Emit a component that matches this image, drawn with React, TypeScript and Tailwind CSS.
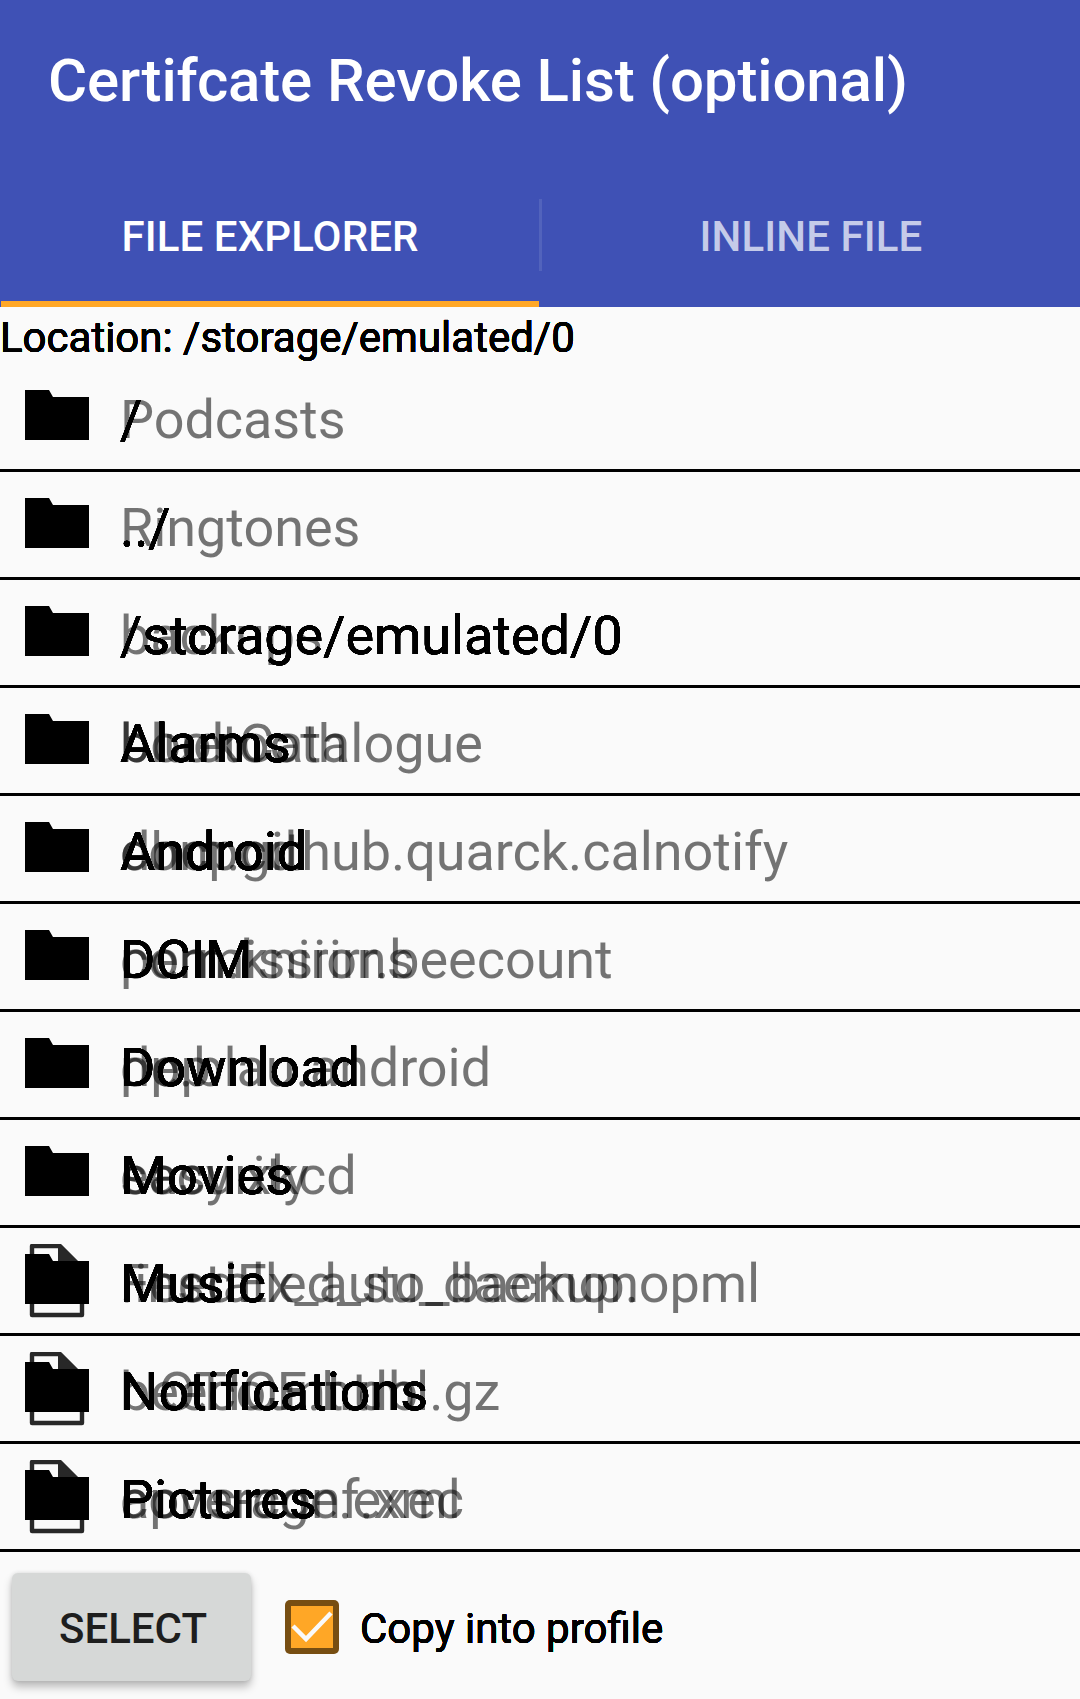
import React from "react";

type Row = { name: string; ghosts: string[]; file?: boolean };

const rows: Row[] = [
  { name: "/", ghosts: ["Podcasts"] },
  { name: "../", ghosts: ["Ringtones"] },
  { name: "/storage/emulated/0", ghosts: ["backups"] },
  { name: "Alarms", ghosts: ["bookCatalogue", "bluetooth"] },
  { name: "Android", ghosts: ["com.github.quarck.calnotify", "dhcpcd"] },
  { name: "DCIM", ghosts: ["com.knirirr.beecount", "permissions"] },
  { name: "Download", ghosts: ["de.blau.android", "ppp"] },
  { name: "Movies", ghosts: ["easy xkcd", "security"] },
  { name: "Music", ghosts: ["FeedEx_auto_backup.opml", ".installed_su_daemon"], file: true },
  { name: "Notifications", ghosts: ["beecount.db", "NOTICE.html.gz"], file: true },
  { name: "Pictures", ghosts: ["apns-conf.xml", "coverage.exec"], file: true },
];

const bold =
  "text-black [text-shadow:0_0_0_#000,0_0_0_#000,0_0_0_#000,0_0_0_#000,0_0_0_#000,0_0_0_#000,0_0_0_#000,0_0_0_#000]";

function Icon({ file }: { file?: boolean }) {
  return (
    <svg width="64" height="76" viewBox="0 0 64 76" className="ml-[25px] mt-[16px] shrink-0">
      {file && (
        <>
          <path d="M7 2h28l22 22v47H7z" fill="none" stroke="#282828" strokeWidth="4.4" strokeLinejoin="round" />
          <path d="M33 2h3l21 22H33z" fill="#282828" />
        </>
      )}
      <path d="M0 10h24l4 7h36v43H0z" fill="#000" />
    </svg>
  );
}

export default function App() {
  return (
    <div className="flex h-[1699px] w-[1080px] flex-col overflow-hidden bg-[#fafafa] font-[Roboto,sans-serif] text-black">
      <header className="flex h-[307px] flex-col bg-[#3f51b5] text-white">
        <h1 className="h-[163px] pl-[48px] pt-[46px] text-[60px] leading-[70px] font-medium tracking-[-0.14px] whitespace-nowrap">
          Certifcate Revoke List (optional)
        </h1>
        <div className="flex h-[144px]">
          <div className="ml-px flex w-[538px] flex-col border-b-[6px] border-[#ffa726]">
            <span className="pt-[49px] text-center text-[42px] leading-[50px] font-medium tracking-[0.1px]">FILE EXPLORER</span>
          </div>
          <div className="mt-[36px] h-[72px] w-[3px] bg-[#5263bc]" />
          <span className="flex-1 pt-[49px] text-center text-[42px] leading-[50px] font-medium tracking-[0.1px] text-[#c5cbe9]">INLINE FILE</span>
        </div>
      </header>
      <p className={`h-[57px] pt-[6px] text-[42px] leading-[50px] ${bold}`}>Location: /storage/emulated/0</p>
      <ul>
        {rows.map((r) => (
          <li key={r.name} className="flex h-[108px] border-b-[3px] border-black">
            <Icon file={r.file} />
            <div className="ml-[31px] mt-[24px] grid text-[54px] leading-[63px] tracking-[-0.06px] whitespace-nowrap">
              {r.ghosts.map((g) => (
                <span key={g} className="col-start-1 row-start-1 text-black/54">{g}</span>
              ))}
              <span className={`col-start-1 row-start-1 ${bold}`}>{r.name}</span>
            </div>
          </li>
        ))}
      </ul>
      <footer className="flex">
        <button className="ml-[12px] mt-[21px] h-[108px] w-[239px] rounded-[6px] bg-[#d6d8d7] pl-[3px] pt-[2px] text-[42px] font-medium text-[#1e1e1e] shadow-[0_6px_8px_rgba(0,0,0,0.25),0_0_4px_rgba(0,0,0,0.12)]">
          SELECT
        </button>
        <svg width="54" height="54" viewBox="0 0 54 54" className="ml-[34px] mt-[48px]">
          <rect width="54" height="54" rx="5" fill="#774e12" />
          <rect x="6" y="6" width="42" height="42" fill="#ffa726" />
          <path d="M8 26l13 13 25-26" fill="none" stroke="#fafafa" strokeWidth="4.5" />
        </svg>
        <span className={`ml-[21px] mt-[52px] text-[42px] leading-[50px] ${bold}`}>Copy into profile</span>
      </footer>
    </div>
  );
}
